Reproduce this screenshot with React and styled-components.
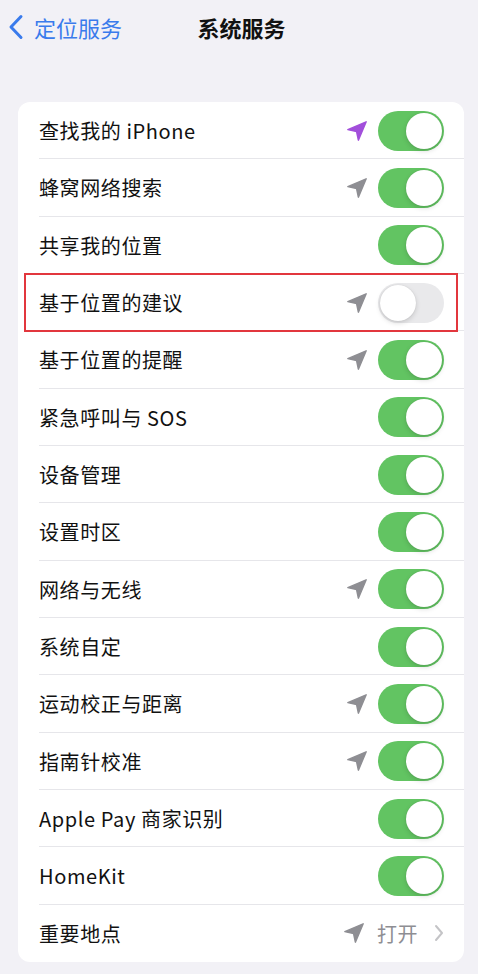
import React from "react";
import styled, { createGlobalStyle } from "styled-components";

const Global = createGlobalStyle`
  html, body { margin: 0; padding: 0; background: #f2f1f6; }
  body { font-family: "Noto Sans CJK SC", "Noto Sans", sans-serif; -webkit-font-smoothing: antialiased; }
`;

const Page = styled.div`
  width: 478px;
  min-height: 974px;
  background: #f2f1f6;
  box-sizing: border-box;
  padding: 0 14px 0 18px;
`;

const NavBar = styled.div`
  height: 54px;
  display: grid;
  grid-template-columns: 1fr auto 1fr;
  align-items: center;
  margin: 0 -14px 0 -18px;
  padding: 0 2px 0 7px;
`;

const Back = styled.div`
  display: flex;
  align-items: center;
  gap: 9px;
  color: #3a7bec;
  font-size: 22px;
`;

const Title = styled.div`
  font-size: 22px;
  font-weight: 700;
  color: #111;
`;

const Card = styled.div`
  margin-top: 48px;
  background: #fff;
  border-radius: 12px;
`;

const Row = styled.div`
  position: relative;
  height: 57.33px;
  display: flex;
  align-items: center;
  padding: 0 20px 0 21px;
  box-sizing: border-box;
  &:not(:last-child)::after {
    content: "";
    position: absolute;
    left: 21px;
    right: 0;
    bottom: 0;
    height: 1px;
    background: #e6e6ea;
  }
`;

const Highlight = styled.div`
  position: absolute;
  left: 6px;
  right: 6px;
  top: -1px;
  bottom: -1px;
  border: 2px solid #e2363d;
  pointer-events: none;
  z-index: 2;
`;

const Label = styled.div`
  flex: 1;
  font-size: 20px;
  color: #111;
  letter-spacing: 0.6px;
`;

const Trail = styled.div`
  display: flex;
  align-items: center;
  gap: 10px;
`;

const Value = styled.span`
  font-size: 20px;
  color: #8e8e93;
  letter-spacing: 0.5px;
  margin: 0 6px 0 2px;
`;

const Switch = styled.div`
  position: relative;
  width: 66px;
  height: 40px;
  border-radius: 20px;
  background: ${(p) => (p.$on ? "#62c462" : "#e9e9eb")};
`;

const Knob = styled.div`
  position: absolute;
  top: 2px;
  left: ${(p) => (p.$on ? "28px" : "2px")};
  width: 36px;
  height: 36px;
  border-radius: 50%;
  background: #fff;
  box-shadow: 0 2px 5px rgba(0, 0, 0, 0.15), 0 0 1px rgba(0, 0, 0, 0.15);
`;

const Arrow = ({ color }) => (
  <svg width="22" height="22" viewBox="0 0 24 24">
    <polygon points="2 10.5 22 2 13.5 22 11.5 12.5" fill={color} strokeLinejoin="round" stroke={color} strokeWidth="1.6" />
  </svg>
);

const rows = [
  { t: "查找我的 iPhone", a: "#a24fdb", on: true },
  { t: "蜂窝网络搜索", a: "#8e8e93", on: true },
  { t: "共享我的位置", on: true },
  { t: "基于位置的建议", a: "#8e8e93", on: false, hl: true },
  { t: "基于位置的提醒", a: "#8e8e93", on: true },
  { t: "紧急呼叫与 SOS", on: true },
  { t: "设备管理", on: true },
  { t: "设置时区", on: true },
  { t: "网络与无线", a: "#8e8e93", on: true },
  { t: "系统自定", on: true },
  { t: "运动校正与距离", a: "#8e8e93", on: true },
  { t: "指南针校准", a: "#8e8e93", on: true },
  { t: "Apple Pay 商家识别", on: true },
  { t: "HomeKit", on: true },
];

export default function App() {
  return (
    <>
      <Global />
      <Page>
        <NavBar>
          <Back>
            <svg width="18" height="26" viewBox="0 0 18 26">
              <path d="M14 2.5 L4 13 L14 23.5" fill="none" stroke="#3a7bec" strokeWidth="3" strokeLinecap="round" strokeLinejoin="round" />
            </svg>
            定位服务
          </Back>
          <Title>系统服务</Title>
          <div />
        </NavBar>
        <Card>
          {rows.map((r) => (
            <Row key={r.t}>
              {r.hl && <Highlight />}
              <Label>{r.t}</Label>
              <Trail>
                {r.a && <Arrow color={r.a} />}
                <Switch $on={r.on}>
                  <Knob $on={r.on} />
                </Switch>
              </Trail>
            </Row>
          ))}
          <Row>
            <Label>重要地点</Label>
            <Trail>
              <Arrow color="#8e8e93" />
              <Value>打开</Value>
              <svg width="10" height="18" viewBox="0 0 10 18">
                <path d="M2 2 L8 9 L2 16" fill="none" stroke="#c4c4c7" strokeWidth="2" strokeLinecap="round" strokeLinejoin="round" />
              </svg>
            </Trail>
          </Row>
        </Card>
      </Page>
    </>
  );
}
